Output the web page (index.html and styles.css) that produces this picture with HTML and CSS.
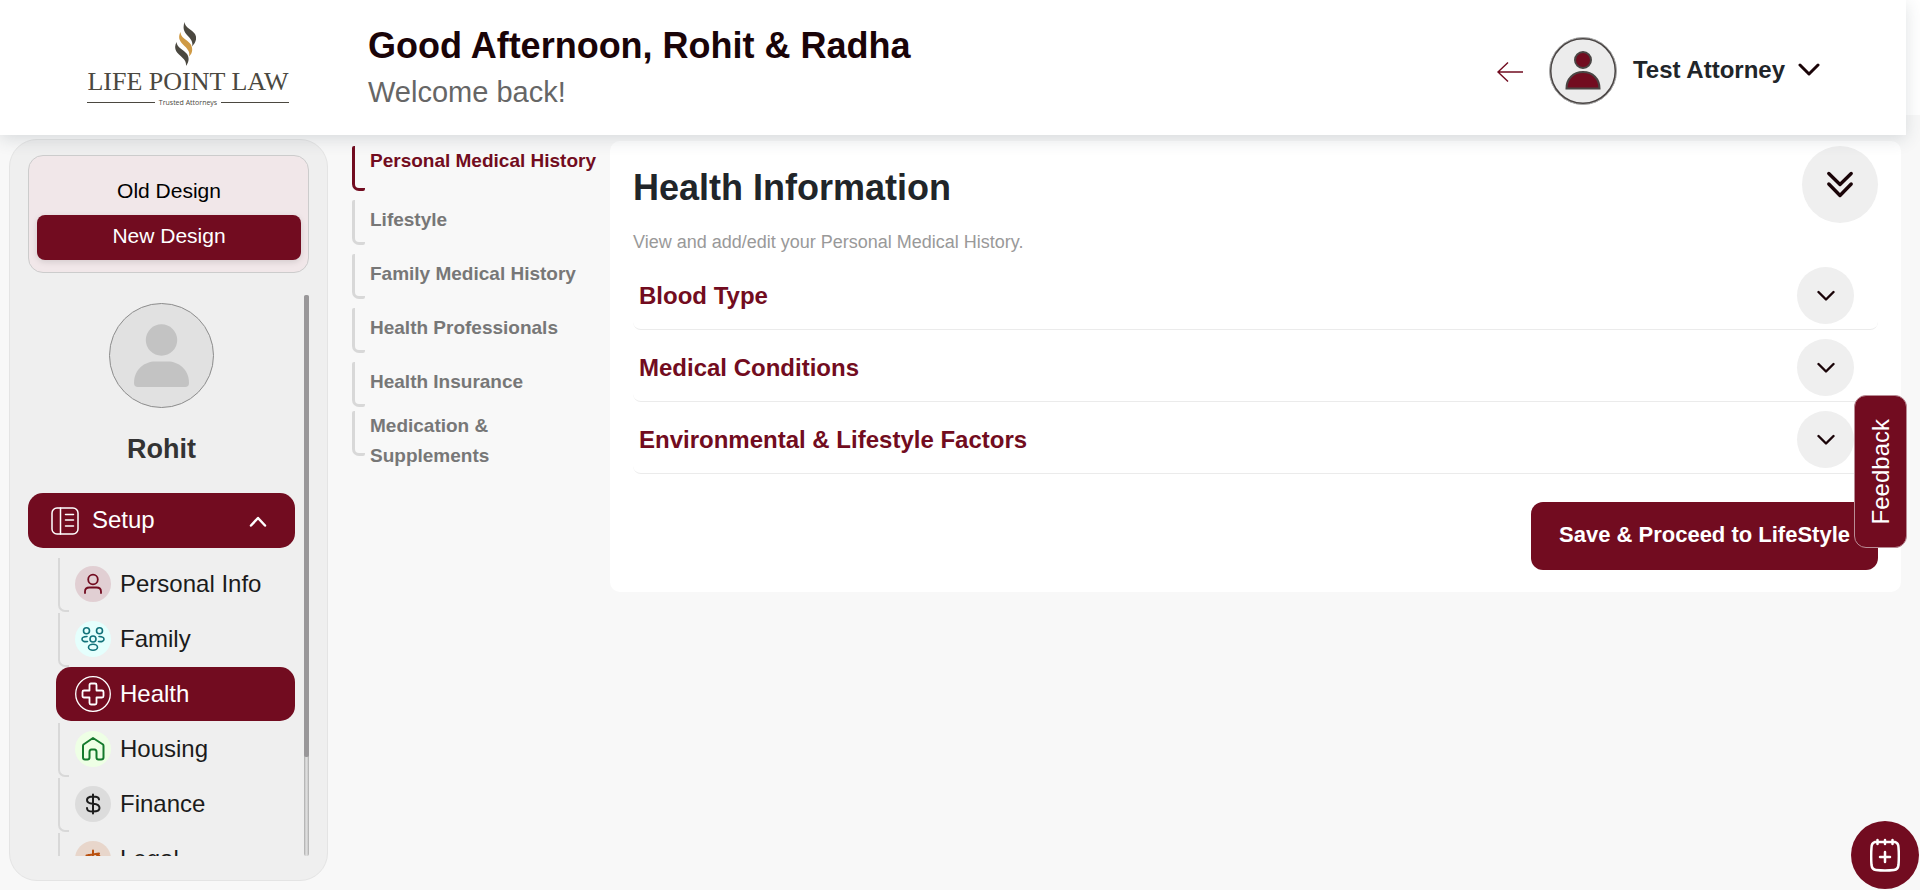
FILE: index.html
```html
<!DOCTYPE html>
<html lang="en">
<head>
<meta charset="utf-8">
<meta name="viewport" content="width=device-width, initial-scale=1">
<title>Life Point Law - Health Information</title>
<link rel="stylesheet" href="styles.css">
</head>
<body>
<div class="top">
  <header class="header">
    <a class="logo" href="#">
      <svg class="logo-flame" viewBox="0 0 21 44" width="21" height="44" aria-hidden="true">
        <path fill="#4b4840" d="M9.500 0C8 5 8 8.500 12 13C15 16.500 18.500 19 17 24.500C20.500 21 22.500 16.500 20 12C17 7.500 10 6 9.500 0Z"/>
        <path fill="#cf9a45" d="M5.500 10C3 15 4 18.500 8 22.500C12 26.500 15.500 29.500 14 34.500C18 31 18 26 15.500 22C12 17.500 5.500 16 5.500 10Z"/>
        <path fill="#4b4840" d="M1.500 20C-1 25 0 29 4 32.500C8 36.500 11.500 38.500 11 44C14 40 14.500 35.500 12 32C8.500 27.500 2 26 1.500 20Z"/>
      </svg>
      <span class="logo-name">LIFE POINT LAW</span>
      <span class="logo-tag">Trusted Attorneys</span>
    </a>
    <div class="greeting">
      <h1 class="greeting-title">Good Afternoon, Rohit &amp; Radha</h1>
      <p class="greeting-sub">Welcome back!</p>
    </div>
    <div class="account">
      <button class="plain" type="button" aria-label="Back">
        <svg width="28" height="22" viewBox="0 0 28 22" fill="none" stroke="#720c20" stroke-width="1.400" aria-hidden="true"><path d="M27 12H2M12 2.500L2 12l10 9.500"/></svg>
      </button>
      <svg class="account-avatar" width="68" height="68" viewBox="0 0 68 68" aria-hidden="true">
        <circle cx="34" cy="34" r="32.500" fill="#ececec" stroke="#4a4544" stroke-width="2"/>
        <circle cx="34" cy="34" r="33.500" fill="none" stroke="#aaa" stroke-width="1"/>
        <g fill="#720c20" stroke="#4a4544" stroke-width="2"><circle cx="34" cy="23" r="8"/><path d="M17.500 51.500C17.500 42 24 35 34 35s16.500 7 16.500 16.500z"/></g>
      </svg>
      <button class="plain account-name" type="button">Test Attorney
        <svg width="22" height="14" viewBox="0 0 22 14" fill="none" stroke="#1a0408" stroke-width="3" stroke-linecap="round" stroke-linejoin="round" aria-hidden="true"><path d="M2 2l9 9 9-9"/></svg>
      </button>
    </div>
  </header>
</div>

<div class="layout">
  <aside class="sidebar">
    <div class="design">
      <button class="design-option" type="button">Old Design</button>
      <button class="design-option design-active" type="button">New Design</button>
    </div>
    <div class="side-body">
      <div class="side-scroll">
        <svg class="side-avatar" width="105" height="105" viewBox="0 0 105 105" aria-hidden="true">
          <circle cx="52.500" cy="52.500" r="52" fill="#e1e1e1" stroke="#8c8c8c"/>
          <circle cx="52.500" cy="37" r="15.700" fill="#c3c3c3"/>
          <path fill="#c3c3c3" d="M25 80C25 66 36 58.500 46 58.500H59C69 58.500 80 66 80 80Q80 84 76 84H29Q25 84 25 80Z"/>
        </svg>
        <h2 class="side-name">Rohit</h2>
        <button class="setup" type="button">
          <svg width="28" height="28" viewBox="0 0 28 28" fill="none" stroke="#fff" stroke-width="1.500" stroke-linecap="round" aria-hidden="true"><rect x="1" y="1" width="26" height="26" rx="5"/><path d="M9.500 1v26M14.500 7.500h8M14.500 13h8M14.500 19h8"/></svg>
          <span class="setup-label">Setup</span>
          <svg width="18" height="12" viewBox="0 0 18 12" fill="none" stroke="#fff" stroke-width="2.500" stroke-linecap="round" stroke-linejoin="round" aria-hidden="true"><path d="M2 10.500l7-7.500 7 7.500"/></svg>
        </button>
        <nav class="side-nav" aria-label="Setup">
          <a class="side-link" href="#"><span class="side-icon icon-personal"><svg width="36" height="36" viewBox="0 0 36 36" fill="none" stroke="#720c20" stroke-width="1.800" stroke-linecap="round" aria-hidden="true"><circle cx="18" cy="13.500" r="4.800"/><path d="M10 27v-1.500Q10 21.500 14.500 21.500h7Q26 21.500 26 25.500V27"/></svg></span>Personal Info</a>
          <a class="side-link" href="#"><span class="side-icon icon-family"><svg width="36" height="36" viewBox="0 0 36 36" fill="none" stroke="#12727a" stroke-width="1.600" stroke-linecap="round" aria-hidden="true"><circle cx="11.500" cy="9.700" r="3"/><circle cx="24.500" cy="9.700" r="3"/><circle cx="18" cy="18" r="3"/><ellipse cx="18" cy="26.200" rx="4.500" ry="3"/><path d="M12 15.500C8.500 15.500 7 16.500 7 18.200S9 21 12.500 20.500M24 15.500C27.500 15.500 29 16.500 29 18.200S27 21 23.500 20.500"/></svg></span>Family</a>
          <a class="side-link side-current" href="#" aria-current="page"><span class="side-icon"><svg width="36" height="36" viewBox="0 0 36 36" fill="none" stroke="#fff" stroke-linejoin="round" aria-hidden="true"><circle cx="18" cy="18" r="17.300" stroke-width="1.300"/><path stroke-width="1.800" d="M16 7.500h4Q21.500 7.500 21.500 9v5.500H27Q28.500 14.500 28.500 16v4Q28.500 21.500 27 21.500H21.500V27Q21.500 28.500 20 28.500H16Q14.500 28.500 14.500 27V21.500H9Q7.500 21.500 7.500 20V16Q7.500 14.500 9 14.500H14.500V9Q14.500 7.500 16 7.500Z"/></svg></span>Health</a>
          <a class="side-link" href="#"><span class="side-icon icon-housing"><svg width="36" height="36" viewBox="0 0 36 36" fill="none" stroke="#147a2c" stroke-width="2" stroke-linejoin="round" aria-hidden="true"><path d="M18 7L8.500 13.500Q8 14 8 15V26.500Q8 28.500 10 28.500H12.500Q14.500 28.500 14.500 26.500V21Q14.500 18.500 16.500 18.500H19.500Q21.500 18.500 21.500 21V26.500Q21.500 28.500 23.500 28.500H26Q28.500 28.500 28.500 26.500V15Q28.500 14 28 13.500Z"/></svg></span>Housing</a>
          <a class="side-link" href="#"><span class="side-icon icon-finance"><svg width="36" height="36" viewBox="0 0 36 36" fill="none" stroke="#1b1b1b" stroke-width="2" stroke-linecap="round" aria-hidden="true"><path d="M18 8.500v19M24 13.500C24 11 22 10.500 18 10.500S12 11.500 12 14s2 3.500 6 3.800S24.500 19.500 24.500 22 22 25.500 18 25.500S12 25 12 22"/></svg></span>Finance</a>
          <a class="side-link" href="#"><span class="side-icon icon-legal"><svg width="36" height="36" viewBox="0 0 36 36" fill="none" stroke="#b9500f" stroke-width="2" stroke-linecap="round" stroke-linejoin="round" aria-hidden="true"><path d="M18 9.500V28M11.500 14.500L24 12.500M14 14L10 22h7.500L14 14M23 13l-3.500 7.500H28L23 13M13 28h10"/></svg></span>Legal</a>
        </nav>
      </div>
      <div class="scrollbar" aria-hidden="true"><div class="scrollbar-thumb"></div></div>
    </div>
  </aside>

  <nav class="sections" aria-label="Health sections">
    <a class="section-link section-current" href="#" aria-current="true">Personal Medical History</a>
    <a class="section-link" href="#">Lifestyle</a>
    <a class="section-link" href="#">Family Medical History</a>
    <a class="section-link" href="#">Health Professionals</a>
    <a class="section-link" href="#">Health Insurance</a>
    <a class="section-link section-long" href="#">Medication &amp; Supplements</a>
  </nav>

  <main class="card">
    <div class="card-head">
      <div>
        <h2 class="card-title">Health Information</h2>
        <p class="card-text">View and add/edit your Personal Medical History.</p>
      </div>
      <button class="round round-large" type="button" aria-label="Expand all">
        <svg width="28" height="28" viewBox="0 0 28 28" fill="none" stroke="#1a0408" stroke-width="3.400" stroke-linecap="round" stroke-linejoin="round" aria-hidden="true"><path d="M2.800 2.500l11.200 11 11.200-11M2.800 13l11.200 11.500L25.200 13"/></svg>
      </button>
    </div>
    <section class="row">
      <h3 class="row-title">Blood Type</h3>
      <button class="round" type="button" aria-label="Expand Blood Type"><svg width="18" height="12" viewBox="0 0 18 12" fill="none" stroke="#1a0408" stroke-width="2.400" stroke-linecap="round" stroke-linejoin="round" aria-hidden="true"><path d="M1.500 2L9 9.500 16.500 2"/></svg></button>
    </section>
    <section class="row">
      <h3 class="row-title">Medical Conditions</h3>
      <button class="round" type="button" aria-label="Expand Medical Conditions"><svg width="18" height="12" viewBox="0 0 18 12" fill="none" stroke="#1a0408" stroke-width="2.400" stroke-linecap="round" stroke-linejoin="round" aria-hidden="true"><path d="M1.500 2L9 9.500 16.500 2"/></svg></button>
    </section>
    <section class="row">
      <h3 class="row-title">Environmental &amp; Lifestyle Factors</h3>
      <button class="round" type="button" aria-label="Expand Environmental and Lifestyle Factors"><svg width="18" height="12" viewBox="0 0 18 12" fill="none" stroke="#1a0408" stroke-width="2.400" stroke-linecap="round" stroke-linejoin="round" aria-hidden="true"><path d="M1.500 2L9 9.500 16.500 2"/></svg></button>
    </section>
    <button class="save" type="button">Save &amp; Proceed to LifeStyle</button>
  </main>
</div>

<button class="feedback" type="button">Feedback</button>
<button class="fab" type="button" aria-label="Add event">
  <svg width="30" height="34" viewBox="0 0 30 34" fill="none" stroke="#fff" stroke-width="2.500" stroke-linecap="round" aria-hidden="true"><path d="M5 4H25Q28.500 5 28.500 9.500Q29.200 18 28.500 27Q28 31.500 24 32Q15 33 6 32Q2 31.500 1.500 27Q.8 18 1.500 9.500Q1.500 5 5 4ZM7.500 2v4M15 2v4M22.500 2v4"/><path d="M15 14v10M10 19h10"/></svg>
</button>
</body>
</html>
```

FILE: styles.css
```css
*,
*::before,
*::after {
  box-sizing: border-box;
}

body {
  margin: 0;
  height: 100vh;
  display: flex;
  flex-direction: column;
  overflow: hidden;
  background: #f8f8f8;
  color: #212529;
  font-family: "Liberation Sans", Arial, sans-serif;
}

h1, h2, h3, p {
  margin: 0;
}

a {
  color: inherit;
  text-decoration: none;
}

button {
  padding: 0;
  border: 0;
  color: inherit;
  font: inherit;
  cursor: pointer;
}

svg {
  display: block;
  flex: none;
}

.plain {
  background: none;
}

/* Header */
.top {
  position: relative;
  z-index: 1;
  padding-right: 14px;
  background: linear-gradient(#fff 115px, transparent 115px);
}

.header {
  display: flex;
  align-items: center;
  height: 135px;
  padding: 0 86px 0 87px;
  background: #fff;
  box-shadow: 0 4px 16px rgba(50, 70, 80, 0.16);
}

.logo {
  width: 202px;
  display: flex;
  flex-direction: column;
  align-items: center;
  margin-right: 79px;
  padding-bottom: 6px;
  color: #4b4840;
}

.logo-flame {
  margin-right: 6px;
}

.logo-name {
  font: 26px/32px "Liberation Serif", serif;
  white-space: nowrap;
}

.logo-tag {
  align-self: stretch;
  display: flex;
  align-items: center;
  gap: 4px;
  font: 7px/10px "Open Sans", sans-serif;
  white-space: nowrap;
}

.logo-tag::before,
.logo-tag::after {
  content: "";
  flex: 1;
  height: 1px;
  background: #4b4840;
}

.greeting {
  flex: 1;
  padding-bottom: 6px;
}

.greeting-title {
  color: #1a0408;
  font-size: 36px;
  line-height: 54px;
}

.greeting-sub {
  color: #666;
  font-size: 29px;
  line-height: 38px;
}

.account {
  display: flex;
  align-items: center;
  padding-top: 6px;
}

.account-avatar {
  margin: 0 16px 0 25px;
}

.account-name {
  display: flex;
  align-items: center;
  gap: 13px;
  padding-bottom: 2px;
  font-size: 24px;
  font-weight: bold;
}

/* Page columns */
.layout {
  flex: 1;
  min-height: 0;
  display: flex;
  align-items: flex-start;
  padding: 4px 19px 9px 9px;
}

.sidebar {
  align-self: stretch;
  width: 319px;
  display: flex;
  flex-direction: column;
  padding: 15px 18px 24px;
  border: 1px solid #e4e4e4;
  border-radius: 28px;
  background: #efefef;
}

.design {
  display: flex;
  flex-direction: column;
  padding: 14px 7px 12px 8px;
  border: 1px solid #ccc;
  border-radius: 15px;
  background: #f1e7e9;
  color: #000;
  font-size: 21px;
}

.design-option {
  height: 45px;
  padding-bottom: 4px;
  border-radius: 8px;
  background: none;
}

.design-active {
  background: #720c20;
  box-shadow: 0 2px 6px rgba(0, 0, 0, 0.12);
  color: #fff;
}

.side-body {
  flex: 1;
  min-height: 0;
  display: flex;
  gap: 9px;
  margin-top: 22px;
}

.side-scroll {
  flex: 1;
  overflow: hidden;
  padding-top: 8px;
}

.side-avatar {
  margin: 0 auto;
}

.side-name {
  margin: 23px 0 25px;
  color: #333;
  font-size: 27px;
  line-height: 37px;
  text-align: center;
}

.setup {
  width: 100%;
  height: 55px;
  display: flex;
  align-items: center;
  gap: 13px;
  padding: 0 28px 0 23px;
  border-radius: 15px;
  background: #720c20;
  color: #fff;
  font-size: 24px;
}

.setup-label {
  flex: 1;
  padding-bottom: 2px;
  text-align: left;
}

.side-nav {
  padding: 9px 0 0 28px;
}

.side-link {
  position: relative;
  height: 54px;
  display: flex;
  align-items: center;
  gap: 9px;
  padding-left: 19px;
  margin-bottom: 1px;
  border-radius: 15px;
  color: #1b1b1b;
  font-size: 24px;
}

.side-link::before {
  content: "";
  position: absolute;
  top: 1px;
  left: 2px;
  width: 11px;
  height: 54px;
  border: 2px solid #d8d8d8;
  border-width: 0 0 2px 2px;
  border-bottom-left-radius: 7px;
}

.side-current {
  background: #720c20;
  color: #fff;
}

.side-current::before {
  content: none;
}

.side-icon {
  border-radius: 50%;
}

.icon-personal { background: #e1cfd3; }
.icon-family { background: #e5fffd; }
.icon-housing { background: #eeffe5; }
.icon-finance { background: #dcdcdc; }
.icon-legal { background: #e8d6cb; }

.scrollbar {
  width: 5px;
  border-radius: 3px;
  background: linear-gradient(90deg, #aaa, #ddd 40%, #ddd 60%, #aaa);
}

.scrollbar-thumb {
  height: 82.4%;
  border-radius: 2px;
  background: #999799;
}

/* Section list */
.sections {
  width: 258px;
  display: flex;
  flex-direction: column;
  margin: 7px 0 0 24px;
  color: #777;
  font-size: 19px;
  font-weight: bold;
  line-height: 30px;
}

.section-link {
  position: relative;
  min-height: 49px;
  padding: 5px 0 0 18px;
  margin-bottom: 5px;
}

.section-link::before {
  content: "";
  position: absolute;
  top: 0;
  left: 0;
  width: 13px;
  height: 45px;
  border: 3px solid #d8d8d8;
  border-width: 0 0 3px 3px;
  border-radius: 2px 2px 2px 7px;
}

.section-current {
  padding-top: 0;
  color: #720c20;
}

.section-current::before {
  border-color: #720c20;
}

.section-long {
  margin-top: -5px;
  padding: 0 80px 0 18px;
}

/* Content card */
.card {
  flex: 1;
  display: flex;
  flex-direction: column;
  margin-top: 2px;
  padding: 5px 23px 22px;
  border-radius: 10px;
  background: #fff;
}

.card-head {
  display: flex;
  justify-content: space-between;
  align-items: flex-start;
  padding-bottom: 2px;
}

.card-title {
  padding-top: 15px;
  font-size: 36px;
  line-height: 54px;
}

.card-text {
  padding-top: 13px;
  color: #999;
  font-size: 18px;
  line-height: 28px;
}

.round {
  width: 57px;
  height: 57px;
  display: flex;
  align-items: center;
  justify-content: center;
  border-radius: 50%;
  background: #efefef;
}

.round-large {
  width: 76px;
  height: 77px;
}

.row {
  display: flex;
  align-items: center;
  justify-content: space-between;
  height: 72px;
  padding: 4px 24px 0 6px;
  border-bottom: 1px solid #ebebeb;
  border-radius: 8px;
}

.row-title {
  color: #720c20;
  font-size: 24px;
}

.save {
  align-self: flex-end;
  height: 68px;
  margin-top: 28px;
  padding: 0 28px 2px;
  border-radius: 12px;
  background: #720c20;
  color: #fff;
  font-size: 22px;
  font-weight: bold;
}

/* Floating controls */
.feedback {
  position: fixed;
  right: 13px;
  top: 395px;
  z-index: 2;
  padding: 23px 12px;
  border: 1px solid #b98c95;
  border-radius: 12px;
  background: #720c20;
  color: #fff;
  font-size: 24px;
  line-height: 27px;
  writing-mode: sideways-lr;
}

.fab {
  position: fixed;
  right: 1px;
  bottom: 1px;
  z-index: 2;
  width: 68px;
  height: 68px;
  display: flex;
  align-items: center;
  justify-content: center;
  border-radius: 50%;
  background: #720c20;
}
```
